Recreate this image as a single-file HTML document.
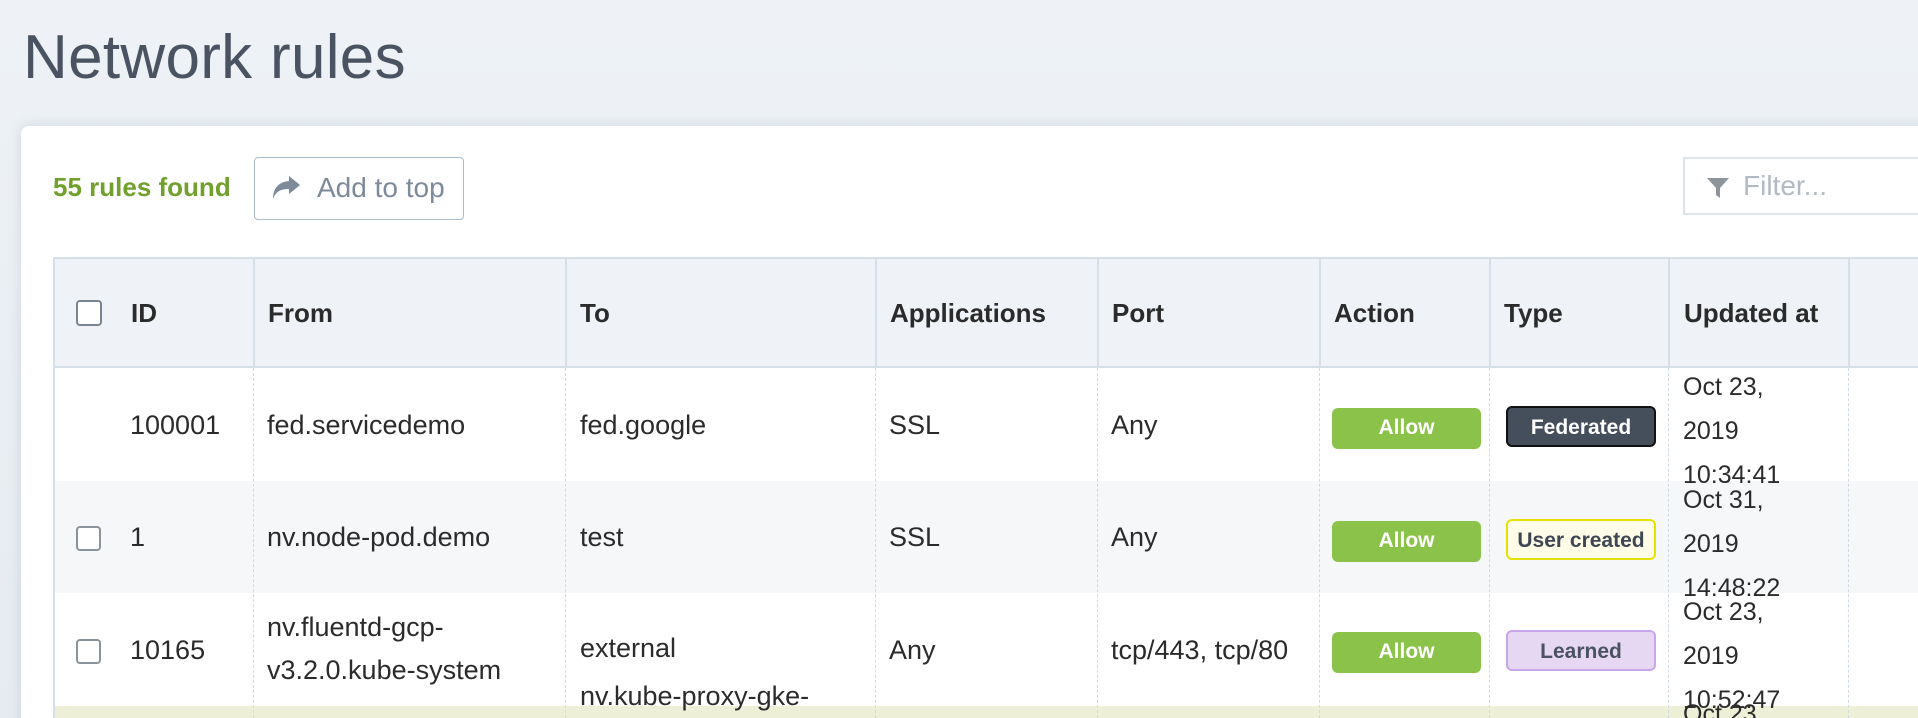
<!DOCTYPE html>
<html><head><meta charset="utf-8"><style>
*{margin:0;padding:0;box-sizing:border-box}
html,body{width:1918px;height:718px;overflow:hidden}
body{background:linear-gradient(#eef2f6,#e6ebf0);font-family:"Liberation Sans",sans-serif;color:#2b2b2b;position:relative}
.a{position:absolute;white-space:nowrap}
h1{position:absolute;left:23px;top:22px;font-weight:300;font-size:62px;color:#4a5361;letter-spacing:0.3px}
.card{position:absolute;left:21px;top:126px;width:1920px;height:600px;background:#fff;border-radius:8px;box-shadow:0 0 12px rgba(120,140,160,.25)}
.cnt{left:53px;top:172px;font-size:26px;font-weight:bold;color:#72a02d}
.btn{left:254px;top:157px;width:210px;height:63px;border:1.5px solid #a9bccb;border-radius:4px;font-size:28px;color:#7d8a99}
.filter{left:1683px;top:157px;width:260px;height:58px;border:2px solid #dde3ea;font-size:28px;color:#b3bac6}
.hdr{left:53px;top:257px;width:1870px;height:111px;background:#eff3f7;border-top:2px solid #d4dfe8;border-bottom:2px solid #d4dfe8;border-left:2px solid #d4dfe8}
.vl{position:absolute;top:257px;width:0;height:111px;border-left:2px solid #d4dfe8}
.vd{position:absolute;top:368px;width:0;height:350px;border-left:1px dashed #d0dae4}
.ht{font-size:26px;font-weight:bold;color:#2b2b2b;top:298px}
.cb{width:26px;height:26px;border:2px solid #7a8490;border-radius:4px;background:#fff}
.td{font-size:27px;color:#2b2b2b}
.dt{font-size:25px;color:#2b2b2b}
.badge{height:41px;border-radius:6px;font-size:21px;font-weight:bold;text-align:center;line-height:39px}
.allow{left:1332px;width:149px;background:#8bc34a;color:#fff}
.type{left:1506px;width:150px}
</style></head><body>
<h1>Network rules</h1>
<div class="card"></div>
<div class="a cnt">55 rules found</div>
<div class="a btn"><svg style="position:absolute;left:16px;top:17px" width="30" height="26" viewBox="0 0 30 26"><path d="M18 1 L29 10 L18 19 L18 14 C10 14 5 16 2 24 C2 14 7 7 18 6 Z" fill="#7d8a99"/></svg><span style="position:absolute;left:62px;top:14px">Add to top</span></div>
<div class="a filter"><svg style="position:absolute;left:22px;top:18px" width="22" height="22" viewBox="0 0 22 22"><path d="M0 1 H22 L13 11 V21 L9 18 V11 Z" fill="#8d949c"/></svg><span style="position:absolute;left:58px;top:11px">Filter...</span></div>
<div class="a hdr"></div>
<div style="position:absolute;left:53px;top:368px;width:1870px;height:113px;background:#fff;border-left:2px solid #d4dfe8"></div>
<div style="position:absolute;left:53px;top:481px;width:1870px;height:112px;background:#f5f7f9;border-left:2px solid #d4dfe8"></div>
<div style="position:absolute;left:53px;top:593px;width:1870px;height:113px;background:#fff;border-left:2px solid #d4dfe8"></div>
<div style="position:absolute;left:53px;top:706px;width:1870px;height:20px;background:#edefd6;border-left:2px solid #d4dfe8"></div>
<div class="vl" style="left:253px"></div><div class="vl" style="left:565px"></div><div class="vl" style="left:875px"></div><div class="vl" style="left:1097px"></div><div class="vl" style="left:1319px"></div><div class="vl" style="left:1489px"></div><div class="vl" style="left:1668px"></div><div class="vl" style="left:1848px"></div>
<div class="vd" style="left:253px"></div><div class="vd" style="left:565px"></div><div class="vd" style="left:875px"></div><div class="vd" style="left:1097px"></div><div class="vd" style="left:1319px"></div><div class="vd" style="left:1489px"></div><div class="vd" style="left:1668px"></div><div class="vd" style="left:1848px"></div>
<div class="a cb" style="left:76px;top:300px"></div>
<div class="a ht" style="left:131px">ID</div><div class="a ht" style="left:268px">From</div><div class="a ht" style="left:580px">To</div><div class="a ht" style="left:890px">Applications</div><div class="a ht" style="left:1112px">Port</div><div class="a ht" style="left:1334px">Action</div><div class="a ht" style="left:1504px">Type</div><div class="a ht" style="left:1684px">Updated at</div>
<!-- row1 -->
<div class="a td" style="left:130px;top:410px">100001</div><div class="a td" style="left:267px;top:410px">fed.servicedemo</div><div class="a td" style="left:580px;top:410px">fed.google</div><div class="a td" style="left:889px;top:410px">SSL</div><div class="a td" style="left:1111px;top:410px">Any</div>
<div class="a badge allow" style="top:408px">Allow</div>
<div class="a badge type" style="top:406px;background:#454e5b;color:#fff;border:2px solid #111">Federated</div>
<div class="a dt" style="left:1683px;top:365px;line-height:44px">Oct 23,<br>2019<br>10:34:41</div>
<!-- row2 -->
<div class="a cb" style="left:76px;top:526px;border-color:#8a939c;width:25px;height:25px"></div>
<div class="a td" style="left:130px;top:522px">1</div><div class="a td" style="left:267px;top:522px">nv.node-pod.demo</div><div class="a td" style="left:580px;top:522px">test</div><div class="a td" style="left:889px;top:522px">SSL</div><div class="a td" style="left:1111px;top:522px">Any</div>
<div class="a badge allow" style="top:521px">Allow</div>
<div class="a badge type" style="top:519px;background:#fffde8;color:#3e4653;border:2px solid #e8e000">User created</div>
<div class="a dt" style="left:1683px;top:478px;line-height:44px">Oct 31,<br>2019<br>14:48:22</div>
<!-- row3 -->
<div class="a cb" style="left:76px;top:639px;border-color:#8a939c;width:25px;height:25px"></div>
<div class="a td" style="left:130px;top:635px">10165</div><div class="a td" style="left:267px;top:606px;line-height:43px">nv.fluentd-gcp-<br>v3.2.0.kube-system</div><div class="a td" style="left:580px;top:624px;line-height:48px">external<br>nv.kube-proxy-gke-</div><div class="a td" style="left:889px;top:635px">Any</div><div class="a td" style="left:1111px;top:635px">tcp/443, tcp/80</div>
<div class="a badge allow" style="top:632px">Allow</div>
<div class="a badge type" style="top:630px;background:#e6d8f3;color:#4a5361;border:2px solid #c9a5ee">Learned</div>
<div class="a dt" style="left:1683px;top:590px;line-height:44px">Oct 23,<br>2019<br>10:52:47</div>
<div class="a dt" style="left:1683px;top:700px">Oct 23,</div>
</body></html>
